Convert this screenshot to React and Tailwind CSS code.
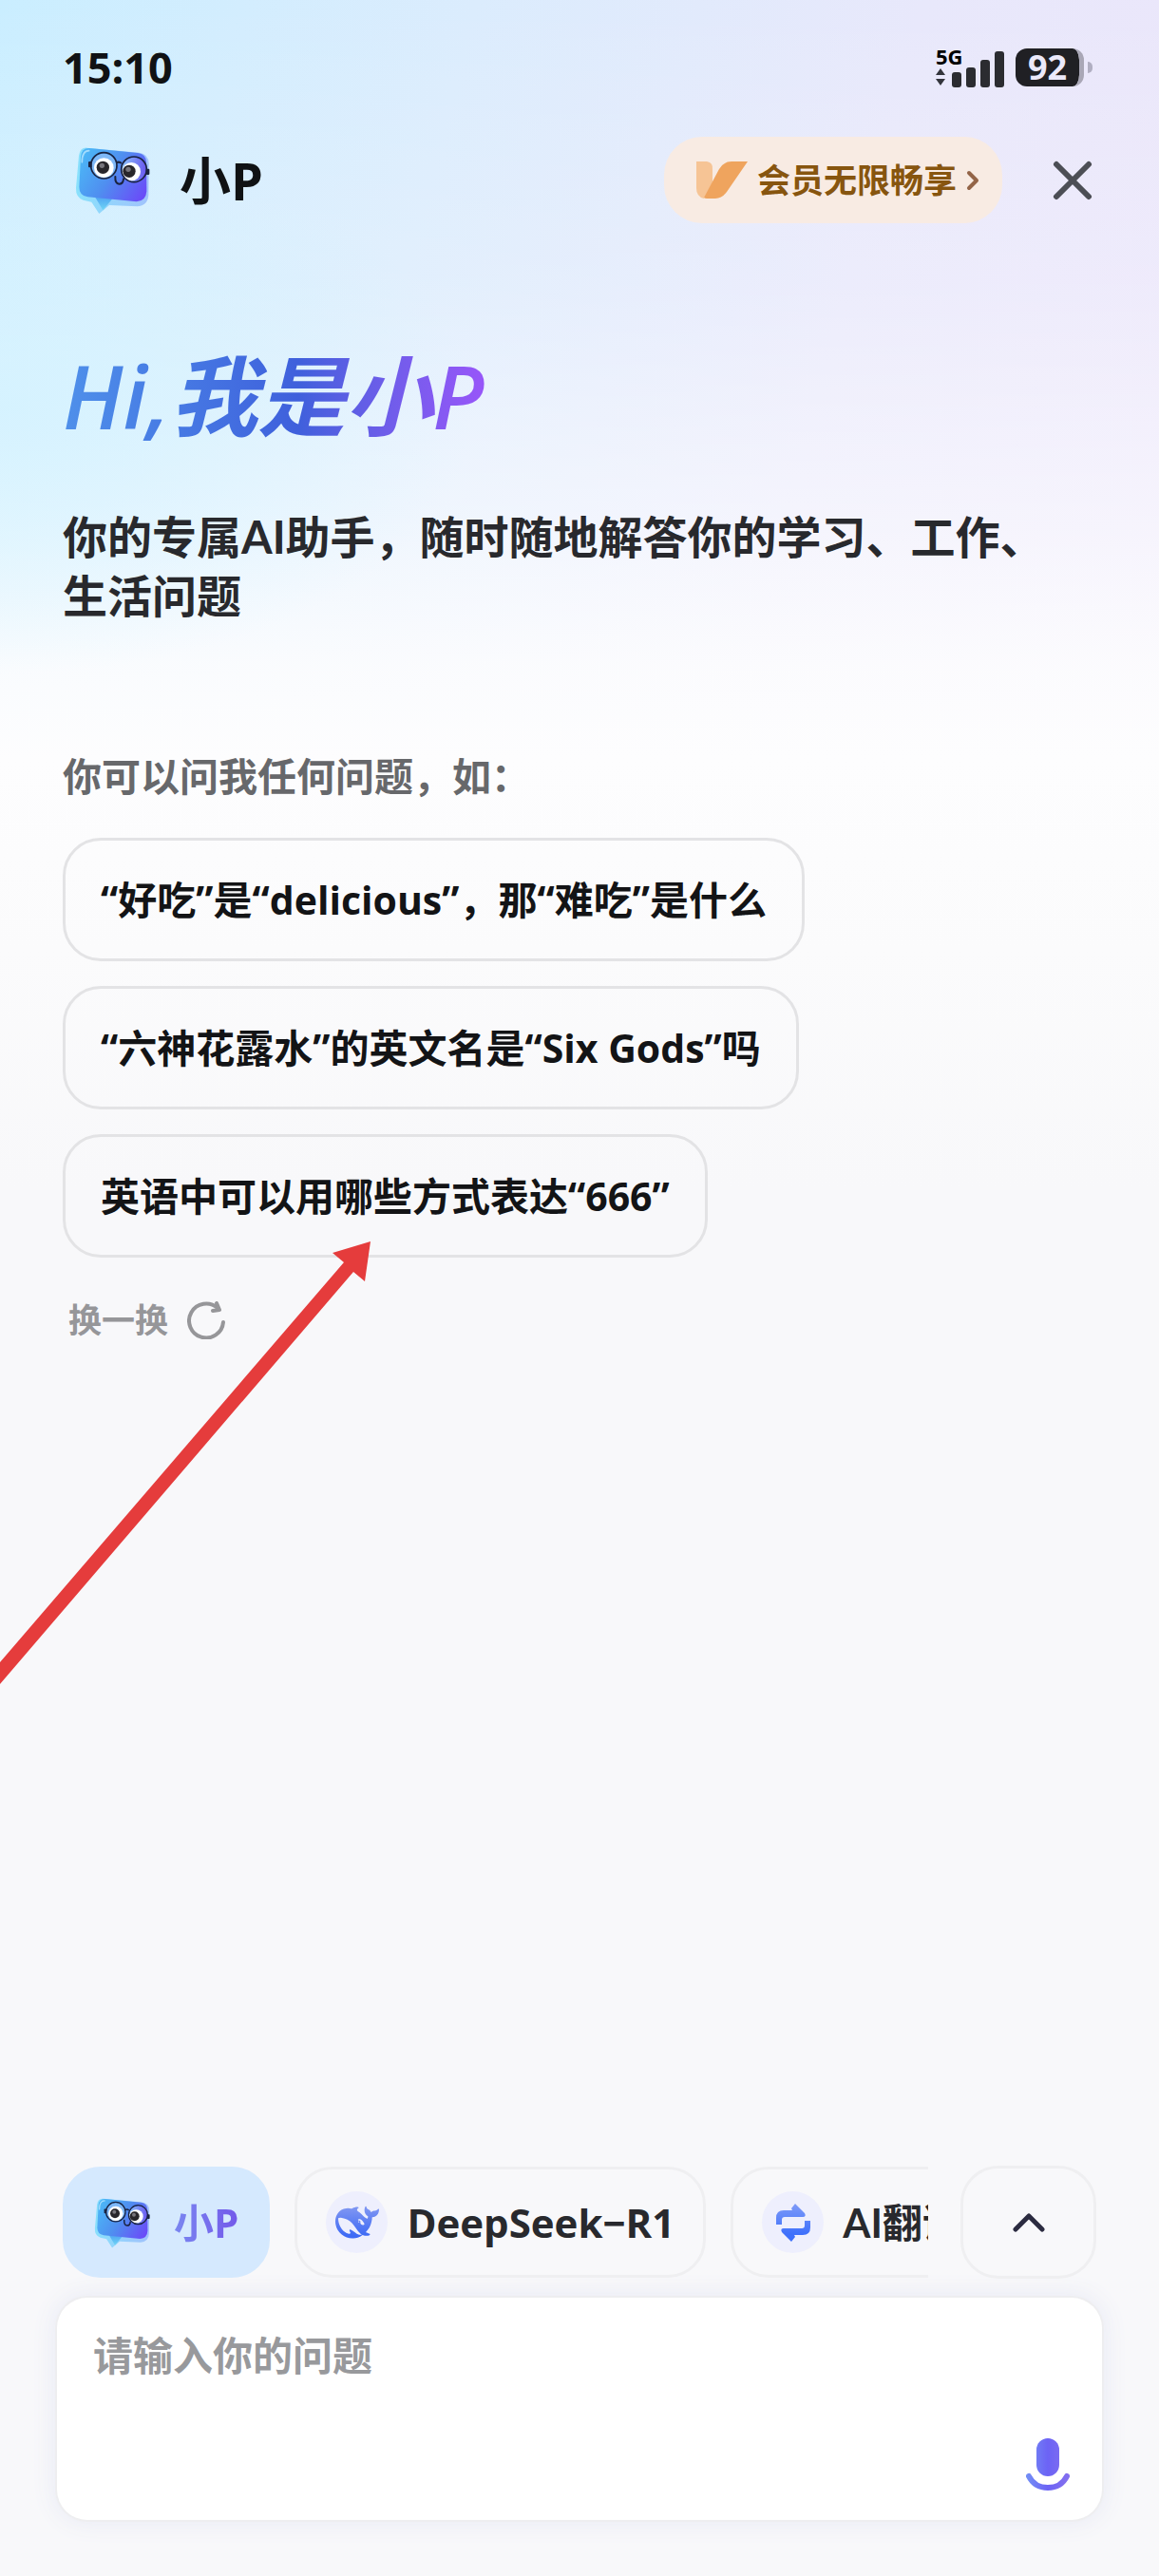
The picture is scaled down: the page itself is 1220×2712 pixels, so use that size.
import { useState } from "react";

const questionSets = [
  ["“好吃”是“delicious”，那“难吃”是什么", "“六神花露水”的英文名是“Six Gods”吗", "英语中可以用哪些方式表达“666”"],
];

const signalBars = ["h-4", "h-[21px]", "h-[29px]", "h-[38px]"];

function Mascot({ className }) {
  return (
    <svg viewBox="60 110 240 225" className={className} aria-hidden="true">
      <defs>
        <linearGradient id="mascotFace" x1="0" y1="0.3" x2="1" y2="0.8">
          <stop offset="0" stopColor="#4cb4f6" />
          <stop offset="0.45" stopColor="#4f8ff0" />
          <stop offset="1" stopColor="#6a4cf8" />
        </linearGradient>
        <linearGradient id="mascotEdge" x1="0" y1="0" x2="1" y2="0">
          <stop offset="0" stopColor="#6fdcfb" />
          <stop offset="1" stopColor="#8fb4fb" />
        </linearGradient>
        <linearGradient id="mascotTail" x1="0" y1="0" x2="0" y2="1">
          <stop offset="0" stopColor="#4ea2f2" />
          <stop offset="1" stopColor="#6fd6f5" />
        </linearGradient>
        <linearGradient id="mascotLens" x1="0" y1="0" x2="1" y2="0">
          <stop offset="0" stopColor="#8cc4fb" />
          <stop offset="1" stopColor="#6a58f0" />
        </linearGradient>
      </defs>
      <path d="M98 121 L262 136 Q292 140 293 170 L292 270 Q290 304 256 306 L168 302 L136 329 L112 292 L86 286 Q62 278 63 248 L72 146 Q76 119 98 121Z" fill="url(#mascotEdge)" opacity="0.75" />
      <path d="M122 274 L178 282 L148 318Z" fill="url(#mascotTail)" />
      <path d="M106 122 L258 137 Q284 141 285 166 L286 258 Q284 290 254 291 L100 276 Q73 272 73 244 L78 148 Q81 120 106 122Z" fill="url(#mascotFace)" />
      <path d="M82 166 Q82 130 104 130" fill="none" stroke="#b9e6ff" strokeWidth="5" strokeLinecap="round" opacity="0.8" />
      <circle cx="151" cy="178" r="39" fill="#7fb8f7" />
      <circle cx="246" cy="190" r="38" fill="url(#mascotLens)" />
      <circle cx="151" cy="184" r="31" fill="#fff" />
      <circle cx="238" cy="196" r="29" fill="#fff" />
      <circle cx="148" cy="183" r="20" fill="#28262b" />
      <circle cx="231" cy="195" r="20" fill="#28262b" />
      <circle cx="145" cy="177" r="8" fill="#77757c" />
      <circle cx="228" cy="189" r="8" fill="#77757c" />
      <g fill="none" stroke="#1a2340" strokeWidth="5">
        <circle cx="151" cy="177" r="41" />
        <circle cx="246" cy="189" r="40" />
        <path d="M191 168 Q199 163 207 170" strokeWidth="6" />
        <path d="M187 212 Q186 234 199 235 Q212 235 213 219" strokeWidth="6" strokeLinecap="round" />
      </g>
      <rect x="102" y="164" width="11" height="19" rx="3" fill="#1a2340" />
      <rect x="284" y="187" width="11" height="19" rx="3" fill="#1a2340" />
    </svg>
  );
}

function WhaleIcon() {
  return (
    <svg viewBox="0 0 24 24" className="size-[46px]" fill="url(#whaleFill)" aria-hidden="true">
      <defs>
        <linearGradient id="whaleFill" x1="0" y1="0" x2="0" y2="1">
          <stop offset="0.1" stopColor="#7b93f2" />
          <stop offset="0.9" stopColor="#3f6bf5" />
        </linearGradient>
      </defs>
      <path d="M23.748 4.482c-.254-.124-.364.113-.512.234-.051.039-.094.09-.137.136-.372.397-.806.657-1.373.626-.829-.046-1.537.214-2.163.848-.133-.782-.575-1.248-1.247-1.548-.352-.156-.708-.311-.955-.65-.172-.241-.219-.51-.305-.774-.055-.16-.11-.323-.293-.35-.2-.031-.278.136-.356.276-.313.572-.434 1.202-.422 1.84.027 1.436.633 2.58 1.838 3.393.137.093.172.187.129.323-.082.28-.18.552-.266.833-.055.179-.137.217-.329.14a5.526 5.526 0 01-1.736-1.18c-.857-.828-1.631-1.742-2.597-2.458a11.365 11.365 0 00-.689-.471c-.985-.957.13-1.743.388-1.836.27-.098.093-.432-.779-.428-.872.004-1.67.295-2.687.684a3.055 3.055 0 01-.465.137 9.597 9.597 0 00-2.883-.102c-1.885.21-3.39 1.102-4.497 2.623C.082 8.606-.231 10.684.152 12.85c.403 2.284 1.569 4.175 3.36 5.653 1.858 1.533 3.997 2.284 6.438 2.14 1.482-.085 3.133-.284 4.994-1.86.47.234.962.327 1.78.397.63.059 1.236-.03 1.705-.128.735-.156.684-.837.419-.961-2.155-1.004-1.682-.595-2.113-.926 1.096-1.296 2.746-2.642 3.392-7.003.05-.347.007-.565 0-.845-.004-.17.035-.237.23-.256a4.173 4.173 0 001.545-.475c1.396-.763 1.96-2.015 2.093-3.517.02-.23-.004-.467-.247-.588zM11.581 18c-2.089-1.642-3.102-2.183-3.52-2.16-.392.024-.321.471-.235.763.09.288.207.486.371.739.114.167.192.416-.113.603-.673.416-1.842-.14-1.897-.167-1.361-.802-2.5-1.86-3.301-3.307-.774-1.393-1.224-2.887-1.298-4.482-.02-.386.093-.522.477-.592a4.696 4.696 0 011.529-.039c2.132.312 3.946 1.265 5.468 2.774.868.86 1.525 1.887 2.202 2.891.72 1.066 1.494 2.082 2.48 2.914.348.292.625.514.891.677-.802.09-2.14.11-3.054-.614zm1-6.44a.306.306 0 01.415-.287.302.302 0 01.2.288.306.306 0 01-.31.307.303.303 0 01-.304-.308zm3.11 1.596c-.2.081-.399.151-.59.16a1.245 1.245 0 01-.798-.254c-.274-.23-.47-.358-.552-.758a1.73 1.73 0 01.016-.588c.07-.327-.008-.537-.239-.727-.187-.156-.426-.199-.688-.199a.559.559 0 01-.254-.078c-.11-.054-.2-.19-.114-.358.028-.054.16-.186.192-.21.356-.202.767-.136 1.146.016.352.144.618.408 1.001.782.391.451.462.576.685.914.176.265.336.537.445.848.067.195-.019.354-.25.452z" />
    </svg>
  );
}

function TranslateIcon() {
  return (
    <svg viewBox="0 0 36 40" className="h-10 w-9" aria-hidden="true">
      <defs>
        <linearGradient id="swapFill" gradientUnits="userSpaceOnUse" x1="0" y1="0" x2="0" y2="40">
          <stop offset="0" stopColor="#7f9bf8" />
          <stop offset="0.8" stopColor="#3e70fb" />
        </linearGradient>
      </defs>
      <path d="M0 22v-7q0-8 8-8h9l-1-2 4-5 10 10q2 4-2 4H9q-3 0-3 3v5z" fill="url(#swapFill)" />
      <path d="M36 18v7q0 8-8 8h-9l1 2-4 5L6 30q-2-4 2-4h19q3 0 3-3v-5z" fill="url(#swapFill)" />
    </svg>
  );
}

function StatusBar() {
  return (
    <div className="flex h-[46px] items-center justify-between">
      <span className="text-[45px] leading-[46px] font-bold text-[#101214]">15:10</span>
      <div className="flex items-center">
        <div className="relative mr-3 flex h-[42px] items-end gap-[5px] pl-[17px]">
          <span className="absolute top-0 left-0 text-[22px] leading-[18px] font-bold text-black">5G</span>
          <svg viewBox="0 0 10 18" className="absolute bottom-[2px] left-0 h-[18px] w-[10px] fill-[#33353c]" aria-hidden="true">
            <path d="M5 0l5 7H0zM5 18l5-7H0z" />
          </svg>
          {signalBars.map((height) => (
            <span key={height} className={`w-[10px] rounded-[3px] bg-[#2b2c30] ${height}`} />
          ))}
        </div>
        <div className="flex h-10 w-[72px] items-center justify-center rounded-xl border-r-[5px] border-[#a9a7b6] bg-[#202024] bg-clip-padding text-[36px] leading-10 font-bold text-[#ebe9fa]">
          92
        </div>
        <span className="mr-1 ml-1 h-3 w-[5px] rounded-r-full bg-[#b1afc2]" />
      </div>
    </div>
  );
}

function Header() {
  return (
    <header className="mt-[50px] flex h-[91px] items-center">
      <Mascot className="ml-[13px] h-[75px] w-20" />
      <span className="ml-[30px] text-[54px] leading-[60px] font-bold text-[#101214]">小P</span>
      <a href="#vip" className="ml-auto flex h-[91px] items-center rounded-[40px] bg-[#f8ebe3] pr-6 pl-[34px]">
        <svg viewBox="0 0 54 39" className="h-[39px] w-[54px]" aria-hidden="true">
          <path d="M0 0h11q7 1 6 9v13L8 39Q0 37 0 28z" fill="#f6c495" />
          <path d="M8 38L24 8q5-8 13-8h17L32 32q-5 7-12 7H11q-2 0-3-1z" fill="#efa45e" />
        </svg>
        <span className="ml-[10px] text-[35px] leading-[50px] font-bold text-[#87550f]">会员无限畅享</span>
        <svg viewBox="0 0 14 22" className="ml-[10px] h-[22px] w-[14px]" fill="none" stroke="#936447" strokeWidth="4" strokeLinecap="round" strokeLinejoin="round" aria-hidden="true">
          <path d="M3 3l8 8-8 8" />
        </svg>
      </a>
      <button type="button" aria-label="关闭" className="mr-1 ml-[53px]">
        <svg viewBox="0 0 42 42" className="size-[42px]" fill="none" stroke="#4c4e55" strokeWidth="6" strokeLinecap="round" aria-hidden="true">
          <path d="M4 4l34 34M38 4L4 38" />
        </svg>
      </button>
    </header>
  );
}

function ToolBar({ active, onSelect }) {
  const pill = "flex h-[117px] shrink-0 items-center rounded-[40px] border-[3px] px-[30px] text-[42px] leading-[60px] font-bold text-[#28292d]";
  const badge = "flex size-[65px] items-center justify-center rounded-full bg-[#eeeffd]";
  const tone = (id) => (active === id ? "border-[#d5e9fe] bg-[#d5e9fe]" : "border-[#efeff1]");

  return (
    <div className="flex items-center gap-[34px] px-[66px]">
      <div className="flex min-w-0 flex-1 gap-[26px] overflow-hidden">
        <button type="button" onClick={() => onSelect("xiaop")} className={`${pill} ${tone("xiaop")}`}>
          <Mascot className="h-14 w-[60px]" />
          <span className="ml-6 bg-linear-to-r from-[#7a86f0] to-[#7358ea] bg-clip-text text-transparent">小P</span>
        </button>
        <button type="button" onClick={() => onSelect("deepseek")} className={`${pill} ${tone("deepseek")}`}>
          <span className={badge}>
            <WhaleIcon />
          </span>
          <span className="ml-5">DeepSeek−R1</span>
        </button>
        <button type="button" onClick={() => onSelect("translate")} className={`${pill} ${tone("translate")}`}>
          <span className={badge}>
            <TranslateIcon />
          </span>
          <span className="ml-5 font-['Lato','Noto_Sans_CJK_SC',sans-serif] whitespace-nowrap">AI翻译</span>
        </button>
      </div>
      <button type="button" aria-label="展开" className="flex h-[119px] w-[143px] shrink-0 items-center justify-center rounded-[40px] border-[3px] border-[#efeff1]">
        <svg viewBox="0 0 34 20" className="h-5 w-[34px]" fill="none" stroke="#2b2b40" strokeWidth="5" strokeLinecap="round" strokeLinejoin="round" aria-hidden="true">
          <path d="M3 17L17 3l14 14" />
        </svg>
      </button>
    </div>
  );
}

function Composer() {
  return (
    <div className="mx-[60px] mt-5 flex h-[234px] flex-col rounded-[32px] bg-white pt-9 pr-[34px] pb-[30px] pl-[38px] shadow-[0_0_0_2px_#eeeef0,0_0_24px_4px_#e9ebf5]">
      <textarea
        aria-label="请输入你的问题"
        placeholder="请输入你的问题"
        className="min-h-0 flex-1 resize-none text-[42px] leading-[50px] font-bold text-[#28292d] outline-none placeholder:text-[#98999c]"
      />
      <button type="button" aria-label="语音输入" className="self-end">
        <svg viewBox="0 0 46 56" className="h-14 w-[46px]" aria-hidden="true">
          <defs>
            <linearGradient id="micFill" gradientUnits="userSpaceOnUse" x1="0" y1="0" x2="46" y2="0">
              <stop offset="0" stopColor="#7490f5" />
              <stop offset="0.5" stopColor="#6c63f5" />
              <stop offset="1" stopColor="#8671ee" />
            </linearGradient>
          </defs>
          <rect x="11" y="0" width="24" height="40" rx="12" fill="url(#micFill)" />
          <path d="M3 40q6 12 20 12t20-12" fill="none" stroke="url(#micFill)" strokeWidth="6" strokeLinecap="round" />
        </svg>
      </button>
    </div>
  );
}

export default function App() {
  const [page, setPage] = useState(0);
  const [active, setActive] = useState("xiaop");
  const questions = questionSets[page % questionSets.length];

  return (
    <div className="relative flex min-h-screen flex-col overflow-hidden bg-[#f8f8fa] bg-[radial-gradient(500px_280px_at_0px_430px,#d3f2ffd0,#d3f2ff00),linear-gradient(180deg,#ffffff00_0px,#ffffff30_300px,#ffffff90_560px,#fdfdfee8_700px,#fdfdfe_800px,#fbfbfc_1000px,#f8f8fa_1250px),linear-gradient(105deg,#caeeff_0%,#dbecfd_32%,#e8e8fb_62%,#ede5fa_100%)] bg-[length:100%_1300px] bg-no-repeat pb-[59px] font-['Open_Sans','Noto_Sans_CJK_SC',sans-serif]">
      <main className="px-[66px] pt-12">
        <StatusBar />
        <Header />

        <h1 className="mt-[127px] w-fit bg-linear-to-r from-[#4f90ea] via-[#3f60dc] via-55% to-[#9a55fa] bg-clip-text pr-2 text-[92px] leading-[110px] font-semibold text-transparent italic">
          Hi,我是小P
        </h1>
        <p className="mt-[62px] max-w-[1040px] font-['Lato','Noto_Sans_CJK_SC',sans-serif] text-[47px] leading-[62px] font-bold text-[#28292d]">
          你的专属AI助手，随时随地解答你的学习、工作、生活问题
        </p>

        <p className="mt-[134px] text-[41px] leading-[50px] font-bold text-[#67686b]">你可以问我任何问题，如：</p>
        <ul className="mt-10 flex flex-col items-start gap-[26px]">
          {questions.map((question) => (
            <li key={question}>
              <button type="button" className="h-[130px] rounded-[40px] border-[3px] border-[#e3e3e5] px-[37px] text-[41px] leading-[60px] font-bold text-[#131416]">
                {question}
              </button>
            </li>
          ))}
        </ul>
        <button type="button" onClick={() => setPage(page + 1)} className="mt-[46px] flex h-10 items-center gap-5 pl-[6px] text-[35px] leading-10 font-bold text-[#969699]">
          换一换
          <svg viewBox="0 0 40 40" className="size-10" fill="none" stroke="#969699" strokeWidth="4" strokeLinecap="round" strokeLinejoin="round" aria-hidden="true">
            <path d="M38 22A18 18 0 1 1 32 7" />
            <path d="M31 2l3 7-7 1" />
          </svg>
        </button>
      </main>

      {/* red pointer over the third question */}
      <svg viewBox="0 0 390 466" className="pointer-events-none absolute top-[1307px] left-0 h-[466px] w-[390px]" aria-hidden="true">
        <path d="M390 0l-40 12 12 10L0 443v23L372 32l12 10z" fill="#e53c3c" />
      </svg>

      <div className="mt-auto">
        <ToolBar active={active} onSelect={setActive} />
        <Composer />
      </div>
    </div>
  );
}
